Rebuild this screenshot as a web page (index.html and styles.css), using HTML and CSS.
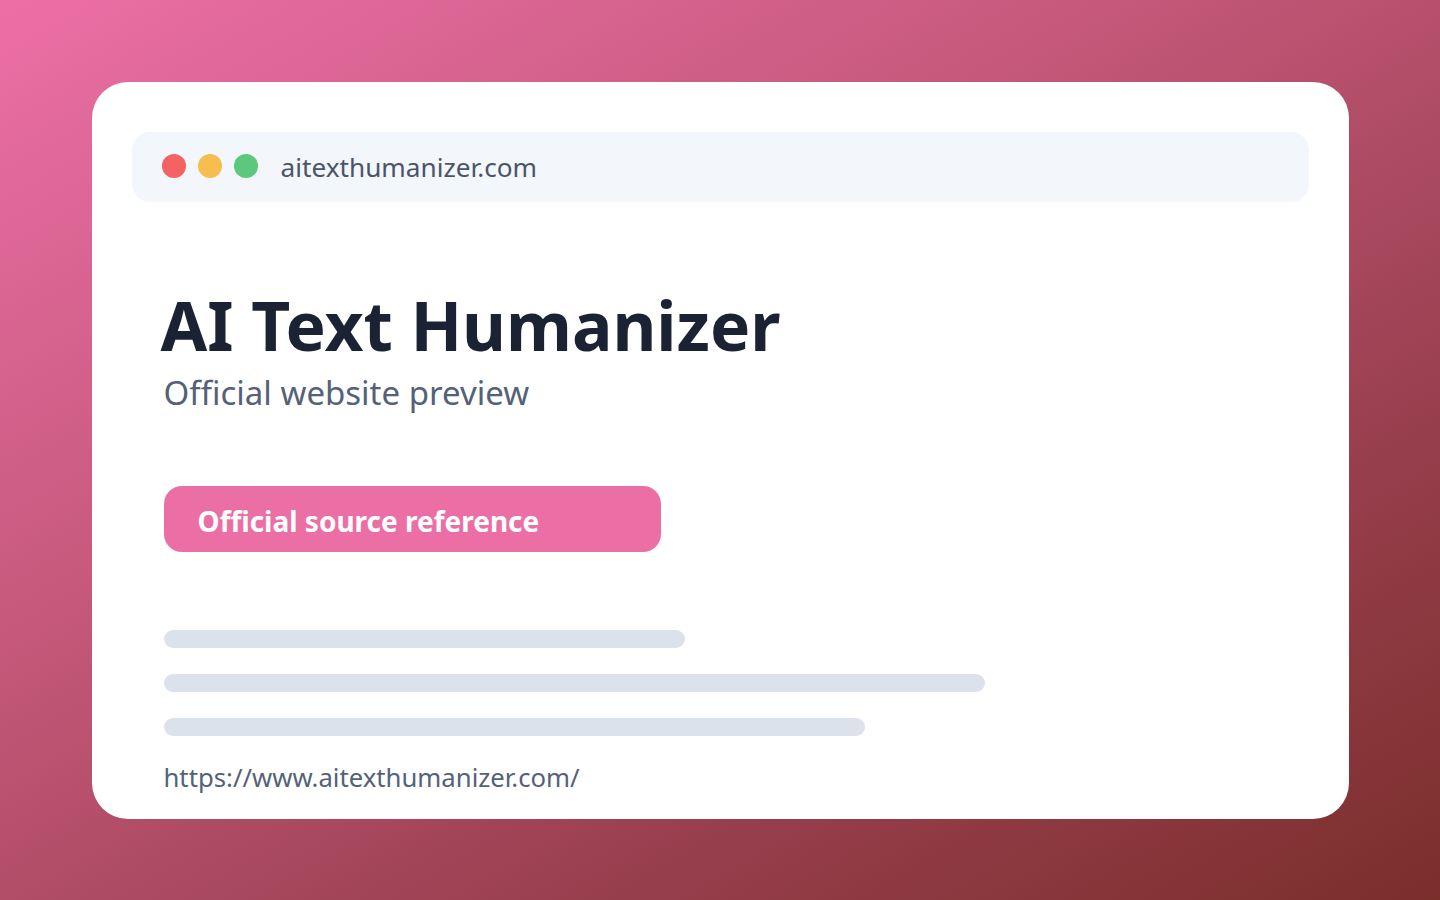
FILE: index.html
```html
<!DOCTYPE html>
<html lang="en">
<head>
<meta charset="utf-8">
<title>AI Text Humanizer</title>
<link rel="stylesheet" href="styles.css">
</head>
<body>
<main class="card">
  <div class="addressbar">
    <span class="dot dot-red"></span>
    <span class="dot dot-yellow"></span>
    <span class="dot dot-green"></span>
    <span class="domain">aitexthumanizer.com</span>
  </div>
  <section class="content">
    <h1 class="title">AI Text Humanizer</h1>
    <p class="subtitle">Official website preview</p>
    <div class="button">Official source reference</div>
    <div class="lines">
      <div class="line line-1"></div>
      <div class="line line-2"></div>
      <div class="line line-3"></div>
    </div>
    <p class="url">https://www.aitexthumanizer.com/</p>
  </section>
</main>
</body>
</html>
```
FILE: styles.css
```css
html, body {
  margin: 0;
  padding: 0;
  height: 100%;
}
body {
  font-family: "Noto Sans", "Open Sans", sans-serif;
  background: linear-gradient(150deg, #ec6fa6 0%, #c85a7e 35%, #9a4050 70%, #7a2e2a 100%);
  display: flex;
  align-items: center;
  justify-content: center;
  min-height: 900px;
}
.card {
  box-sizing: border-box;
  width: 1257px;
  height: 737px;
  background: #ffffff;
  border-radius: 36px;
  padding: 50px 40px 0 40px;
  display: flex;
  flex-direction: column;
}
.addressbar {
  height: 70px;
  background: #f3f6fb;
  border-radius: 18px;
  display: flex;
  align-items: center;
  padding-left: 30px;
  gap: 12px;
}
.dot {
  width: 24px;
  height: 24px;
  border-radius: 50%;
  margin-top: -2px;
}
.dot-red { background: #f46262; }
.dot-yellow { background: #f6bd4f; }
.dot-green { background: #5bc87d; }
.domain {
  margin-left: 11px;
  font-size: 26.2px;
  color: #4a5568;
}
.content {
  padding-left: 32px;
  display: flex;
  flex-direction: column;
  align-items: flex-start;
}
.title {
  margin: 78px 0 0 -3px;
  font-size: 67.6px;
  font-weight: 700;
  line-height: 90px;
  color: #1a2233;
  letter-spacing: 0;
}
.subtitle {
  margin: 2px 0 0 0;
  font-size: 33px;
  line-height: 42px;
  color: #556178;
}
.button {
  margin-top: 72px;
  box-sizing: border-box;
  width: 497px;
  height: 66px;
  background: #eb6fa5;
  border-radius: 18px;
  color: #ffffff;
  font-size: 28px;
  font-weight: 700;
  line-height: 66px;
  padding: 2px 0 0 34px;
}
.lines {
  margin-top: 78px;
  display: flex;
  flex-direction: column;
  gap: 26px;
}
.line {
  height: 18px;
  border-radius: 9px;
  background: #dce2ec;
}
.line-1 { width: 521px; }
.line-2 { width: 821px; }
.line-3 { width: 701px; }
.url {
  margin: 24px 0 0 0;
  font-size: 25.7px;
  line-height: 36px;
  color: #556178;
}
```
